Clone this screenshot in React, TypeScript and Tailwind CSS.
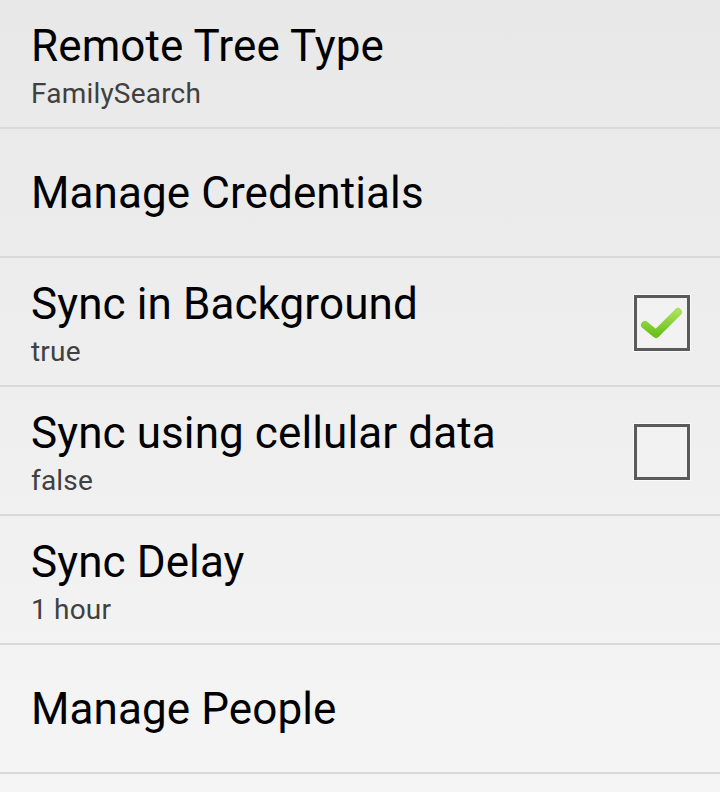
import React from "react";

type Item = { title: string; summary?: string; check?: boolean };

const items: Item[] = [
  { title: "Remote Tree Type", summary: "FamilySearch" },
  { title: "Manage Credentials" },
  { title: "Sync in Background", summary: "true", check: true },
  { title: "Sync using cellular data", summary: "false", check: false },
  { title: "Sync Delay", summary: "1 hour" },
  { title: "Manage People" },
];

function CheckBox({ checked }: { checked: boolean }) {
  return (
    <div className="w-[56px] h-[56px] mt-[3px] border-[3px] border-[#5a5a5a] bg-[#f2f2f2] shadow-[0_0_0_1px_#fafafa] flex items-center justify-center">
      {checked && (
        <svg width="44" height="36" viewBox="0 0 44 36">
          <defs>
            <linearGradient id="g" x1="0" y1="0" x2="0" y2="1">
              <stop offset="0" stopColor="#a8e05a" />
              <stop offset="1" stopColor="#6cc21c" />
            </linearGradient>
          </defs>
          <path
            d="M5 20 L16 29 L38 7"
            fill="none"
            stroke="url(#g)"
            strokeWidth="8"
            strokeLinecap="round"
            strokeLinejoin="round"
          />
        </svg>
      )}
    </div>
  );
}

export default function App() {
  return (
    <div
      className="w-[720px] h-[792px] overflow-hidden bg-gradient-to-b from-[#e8e8e8] to-[#f5f5f5]"
      style={{ fontFamily: "Roboto, 'Noto Sans', sans-serif" }}
    >
      {items.map((it) => (
        <div
          key={it.title}
          className="h-[129px] border-b-2 border-[#d9d9d9] flex items-center pl-[31px] pr-[30px]"
        >
          <div className={it.summary ? "flex-1 flex flex-col pt-[4px]" : "flex-1 flex flex-col"}>
            <div className="text-[44px] leading-[52px] text-black tracking-[0.1px]">{it.title}</div>
            {it.summary && (
              <div className="text-[28px] leading-[34px] text-[#404040] mt-[5px] tracking-[0.2px]">{it.summary}</div>
            )}
          </div>
          {it.check !== undefined && <CheckBox checked={it.check} />}
        </div>
      ))}
    </div>
  );
}
